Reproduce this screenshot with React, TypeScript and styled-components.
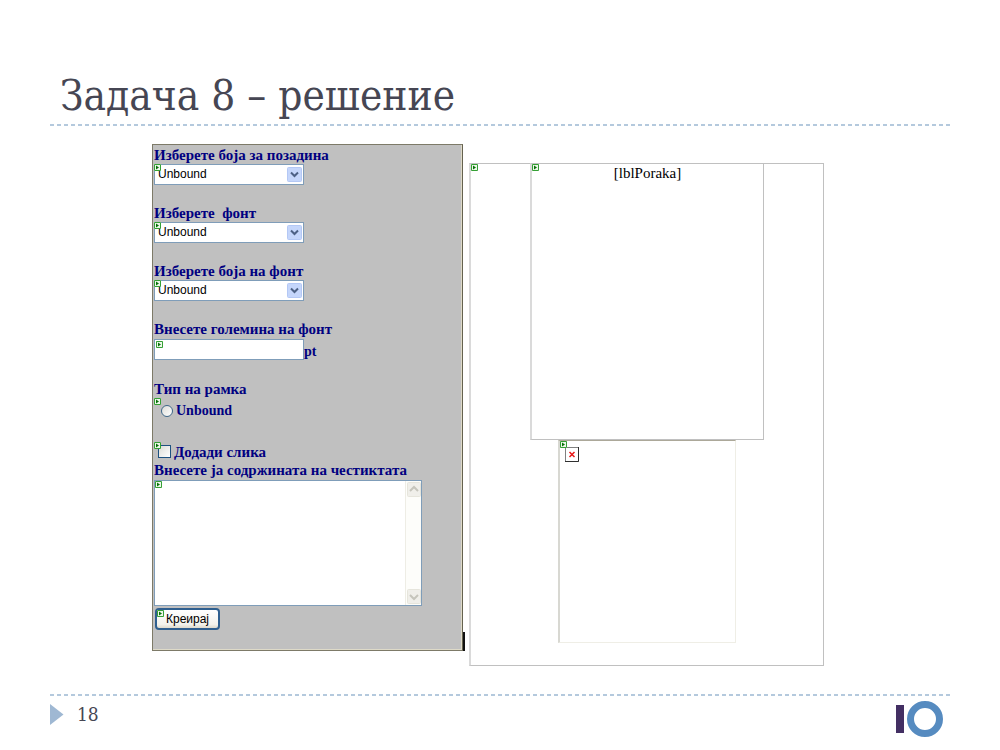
import React from "react";
import styled, { createGlobalStyle } from "styled-components";

const GlobalStyle = createGlobalStyle`
  *, *::before, *::after { box-sizing: border-box; }
  body { margin: 0; background: #fff; }
`;

const serif = `"Liberation Serif", "Times New Roman", serif`;
const sans = `"Liberation Sans", Arial, sans-serif`;
const display = `"DejaVu Serif Condensed", "DejaVu Serif", serif`;

const Slide = styled.div`
  display: flex;
  flex-direction: column;
  min-height: 100vh;
  padding: 68px 50px 0;
  background: #fff;
`;

const Dashes = styled.div`
  height: 2px;
  background: repeating-linear-gradient(90deg, #b4c9dd 0 4px, transparent 4px 7px);
`;

const Title = styled.h1`
  margin: 0;
  padding: 0 10px;
  font: 400 42px/56px ${display};
  color: #464653;
`;

const Content = styled.main`
  display: grid;
  grid-template-columns: 311fr 355fr;
  gap: 6px;
  align-items: start;
  padding: 18px 126px 28px 102px;
`;

const FormPanel = styled.form`
  position: relative;
  display: flex;
  flex-direction: column;
  align-items: flex-start;
  padding: 1px 1px 20px;
  background: #c0c0c0;
  border: 1px solid #7d7a68;
  border-right-color: #65624f;
  box-shadow: inset -1px -1px #dedac8;
  font: 700 15px/18px ${serif};
  color: #000080;
`;

const Caret = styled.span`
  position: absolute;
  right: -3px;
  bottom: -1px;
  width: 2px;
  height: 19px;
  background: #111;
`;

const Field = styled.div`
  display: flex;
  flex-direction: column;
  align-items: flex-start;
  margin-bottom: 19px;
`;

const Label = styled.label`
  white-space: pre;
`;

const OptionLabel = styled(Label)`
  font-size: 14px;
`;

const Control = styled.div`
  position: relative;
  display: flex;
  align-items: center;
`;

const SizeRow = styled(Control)`
  align-items: flex-end;
  margin: 1px 0;
`;

const Unit = styled.span`
  font-size: 14px;
  line-height: 16px;
`;

const Select = styled.select`
  appearance: none;
  width: 150px;
  height: 21px;
  padding: 0 20px 1px 3px;
  border: 1px solid #7f9db9;
  border-radius: 0;
  background: #fff;
  font: 12px/18px ${sans};
  color: #000;
`;

const SelectArrow = styled.svg`
  position: absolute;
  top: 3px;
  right: 2px;
  width: 15px;
  height: 15px;
  pointer-events: none;
`;

const TextInput = styled.input`
  width: 150px;
  height: 21px;
  padding: 0 4px;
  border: 1px solid #7f9db9;
  font: 12px/18px ${sans};
`;

const Marker = styled.svg`
  position: absolute;
  top: 0;
  left: 0;
  width: 7px;
  height: 7px;
  pointer-events: none;
`;

const InputMarker = styled(Marker)`
  top: 2px;
  left: 2px;
`;

const ChoiceRow = styled(Control)<{ $kind: "radio" | "check" }>`
  gap: 3px;
  height: ${(p) => (p.$kind === "radio" ? "25px" : "19px")};
  padding-left: ${(p) => (p.$kind === "radio" ? "7px" : "4px")};
`;

const Radio = styled.input`
  appearance: none;
  width: 12px;
  height: 12px;
  margin: 0;
  border: 1px solid #3f6788;
  border-radius: 50%;
  background: linear-gradient(135deg, #dcdcd7, #fff);
`;

const Checkbox = styled.input`
  appearance: none;
  width: 13px;
  height: 13px;
  margin: 0;
  border: 1px solid #1c5180;
  background: linear-gradient(135deg, #dcdcd7, #fff);
`;

const AreaFrame = styled.div`
  position: relative;
  display: flex;
  width: 268px;
  max-width: 100%;
  height: 126px;
  margin: 1px 0 2px;
  border: 1px solid #7f9db9;
  background: #fff;
`;

const TextArea = styled.textarea`
  flex: 1;
  min-width: 0;
  padding: 4px;
  border: 0;
  resize: none;
  background: transparent;
  font: 12px/18px ${sans};
`;

const ScrollTrack = styled.div`
  display: flex;
  flex-direction: column;
  justify-content: space-between;
  width: 16px;
  padding: 1px;
  background: #fdfdfa;
  border-left: 1px solid #eeede5;
`;

const ScrollArrow = styled.svg`
  width: 14px;
  height: 15px;
`;

const CreateButton = styled.button`
  width: 65px;
  height: 22px;
  padding: 0;
  border: 2px solid #2f5f8f;
  border-radius: 4px;
  background: linear-gradient(#fff, #f3f2ec 80%, #dedacd);
  font: 12px/16px ${sans};
  color: #000;
`;

const ButtonBox = styled(Control)`
  margin-left: 1px;
`;

const Preview = styled.section`
  position: relative;
  display: flex;
  flex-direction: column;
  align-items: center;
  margin-top: 19px;
  padding-bottom: 22px;
  border: 1px solid #c0c0c0;
  border-left: 2px solid #dadada;
`;

const MessageBox = styled.div`
  position: relative;
  width: 234px;
  max-width: 100%;
  height: 277px;
  margin-top: -1px;
  border: 1px solid #c0c0c0;
  border-left: 2px solid #dadada;
  font: 15px/18px ${serif};
  color: #000;
  text-align: center;
`;

const ImageBox = styled.div`
  position: relative;
  width: 178px;
  max-width: 100%;
  height: 203px;
  padding: 6px 5px;
  border: 1px solid #efeee6;
  border-top-color: #aca899;
  border-left: 2px solid #d8d8d2;
`;

const BrokenImage = styled.svg`
  display: block;
  width: 14px;
  height: 15px;
`;

const Footer = styled.footer`
  display: flex;
  align-items: flex-start;
  padding-top: 4px;
`;

const Arrow = styled.svg`
  width: 14px;
  height: 22px;
  margin-top: 4px;
`;

const PageNumber = styled.span`
  flex: 1;
  margin-left: 13px;
  font: 19px/28px ${display};
  color: #464653;
`;

const Logo = styled.svg`
  width: 48px;
  height: 38px;
  margin-right: 6px;
`;

const glyph = (
  <>
    <path d="M0 0h7v7H0z" fill="#eef8ea" />
    <path d="M.5.5h6v6h-6z" fill="none" stroke="#35a035" />
    <path d="M2 1.5v4L5 3.5z" fill="#087008" />
  </>
);

function SelectField({ id, label }: { id: string; label: string }) {
  return (
    <Field>
      <Label htmlFor={id}>{label}</Label>
      <Control>
        <Select id={id}>
          <option>Unbound</option>
        </Select>
        <SelectArrow viewBox="0 0 15 15" aria-hidden>
          <rect x=".5" y=".5" width="14" height="14" rx="1" fill="#c5d6fb" stroke="#b4c8f5" />
          <path d="M4 5.5 7.5 9 11 5.5" fill="none" stroke="#4d6185" strokeWidth="2" />
        </SelectArrow>
        <Marker viewBox="0 0 7 7" aria-hidden>{glyph}</Marker>
      </Control>
    </Field>
  );
}

function Scroll({ d }: { d: string }) {
  return (
    <ScrollArrow viewBox="0 0 14 15" aria-hidden>
      <rect x=".5" y=".5" width="13" height="14" rx="1" fill="#f0efea" stroke="#e6e5dc" />
      <path d={d} fill="none" stroke="#c6c5bc" strokeWidth="2" />
    </ScrollArrow>
  );
}

export default function App() {
  return (
    <>
      <GlobalStyle />
      <Slide>
        <Title>Задача 8 – решение</Title>
        <Dashes />
        <Content>
          <FormPanel onSubmit={(e) => e.preventDefault()}>
            <SelectField id="background" label="Изберете боја за позадина" />
            <SelectField id="font" label="Изберете  фонт" />
            <SelectField id="color" label="Изберете боја на фонт" />
            <Field>
              <Label htmlFor="size">Внесете големина на фонт</Label>
              <SizeRow>
                <TextInput id="size" type="text" />
                <InputMarker viewBox="0 0 7 7" aria-hidden>{glyph}</InputMarker>
                <Unit>pt</Unit>
              </SizeRow>
            </Field>
            <Field>
              <span>Тип на рамка</span>
              <ChoiceRow $kind="radio">
                <Radio type="radio" id="border" name="border" />
                <OptionLabel htmlFor="border">Unbound</OptionLabel>
                <Marker viewBox="0 0 7 7" aria-hidden>{glyph}</Marker>
              </ChoiceRow>
            </Field>
            <ChoiceRow $kind="check">
              <Checkbox type="checkbox" id="image" />
              <Label htmlFor="image">Додади слика</Label>
              <Marker viewBox="0 0 7 7" aria-hidden>{glyph}</Marker>
            </ChoiceRow>
            <Label htmlFor="message">Внесете ја содржината на честиктата</Label>
            <AreaFrame>
              <TextArea id="message" />
              <ScrollTrack>
                <Scroll d="M3 9 7 5 11 9" />
                <Scroll d="M3 6 7 10 11 6" />
              </ScrollTrack>
              <Marker viewBox="0 0 7 7" aria-hidden>{glyph}</Marker>
            </AreaFrame>
            <ButtonBox>
              <CreateButton type="submit">Креирај</CreateButton>
              <InputMarker viewBox="0 0 7 7" aria-hidden>{glyph}</InputMarker>
            </ButtonBox>
            <Caret />
          </FormPanel>
          <Preview>
            <Marker viewBox="0 0 7 7" aria-hidden>{glyph}</Marker>
            <MessageBox>
              <Marker viewBox="0 0 7 7" aria-hidden>{glyph}</Marker>
              [lblPoraka]
            </MessageBox>
            <ImageBox>
              <Marker viewBox="0 0 7 7" aria-hidden>{glyph}</Marker>
              <BrokenImage viewBox="0 0 14 15" role="img" aria-label="">
                <path d="M.5.5h13v14H.5z" fill="#fff" stroke="#808080" />
                <path d="M13.500 0v14.500H0" fill="none" stroke="#303030" />
                <path d="M4.500 5l5 5M9.500 5l-5 5" stroke="#e81818" strokeWidth="1.500" />
              </BrokenImage>
            </ImageBox>
          </Preview>
        </Content>
        <Dashes />
        <Footer>
          <Arrow viewBox="0 0 14 22" aria-hidden>
            <path d="M0 0 13.500 10.500 0 21z" fill="#9fb8d3" />
          </Arrow>
          <PageNumber>18</PageNumber>
          <Logo viewBox="0 0 48 38" role="img" aria-label="">
            <rect x="0" y="5" width="8" height="28" fill="#432f63" />
            <circle cx="29" cy="19" r="14.500" fill="none" stroke="#568bc0" strokeWidth="7" />
          </Logo>
        </Footer>
      </Slide>
    </>
  );
}
